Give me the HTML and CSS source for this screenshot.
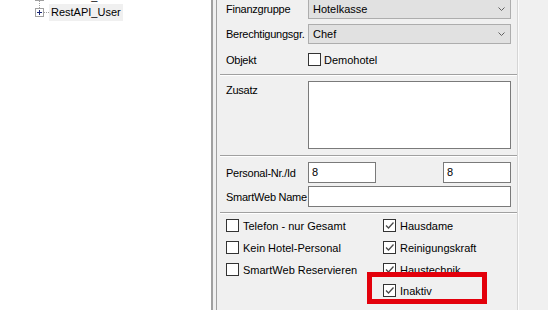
FILE: index.html
```html
<!DOCTYPE html>
<html lang="de">
<head>
<meta charset="utf-8">
<title>Benutzer</title>
<link rel="stylesheet" href="styles.css">
</head>
<body>
<div class="window">
  <div class="tree">
    <div class="node cut">
      <span class="exp"></span><span class="dots"></span><span class="lbl plain">RestAPI_Demo</span>
    </div>
    <div class="node">
      <span class="exp"><span class="up"></span></span><span class="dots"></span><span class="lbl">RestAPI_User</span>
    </div>
  </div>
  <div class="splitter"></div>
  <div class="panel">
    <div class="content">
      <div class="row first">
        <span class="lab">Finanzgruppe</span>
        <div class="select"><span>Hotelkasse</span><svg class="chev" width="7" height="4" viewBox="0 0 7 4"><path d="M0.5 0.5 L3.5 3.5 L6.5 0.5" fill="none" stroke="#606060" stroke-width="1"/></svg></div>
      </div>
      <div class="row gap5">
        <span class="lab">Berechtigungsgr.</span>
        <div class="select"><span>Chef</span><svg class="chev" width="7" height="4" viewBox="0 0 7 4"><path d="M0.5 0.5 L3.5 3.5 L6.5 0.5" fill="none" stroke="#606060" stroke-width="1"/></svg></div>
      </div>
      <div class="row objekt">
        <span class="lab">Objekt</span>
        <span class="cb"></span><span class="cbtext tight">Demohotel</span>
      </div>
      <div class="sep sep1"></div>
      <div class="row top zusatz">
        <span class="lab labtop">Zusatz</span>
        <div class="area"></div>
      </div>
      <div class="sep sep2"></div>
      <div class="row inprow">
        <span class="lab">Personal-Nr./Id</span>
        <div class="inp short">8</div>
        <div class="inp short push">8</div>
      </div>
      <div class="row inprow2">
        <span class="lab">SmartWeb Name</span>
        <div class="inp wide"></div>
      </div>
      <div class="sep sep3"></div>
      <div class="checks">
        <label class="chk"><span class="cb"></span>Telefon - nur Gesamt</label>
        <label class="chk"><span class="cb on"><svg width="11" height="11" viewBox="0 0 11 11"><path d="M2 5.5 L4.5 8 L9.5 2.5" fill="none" stroke="#4a4a4a" stroke-width="1.3"/></svg></span>Hausdame</label>
        <label class="chk"><span class="cb"></span>Kein Hotel-Personal</label>
        <label class="chk"><span class="cb on"><svg width="11" height="11" viewBox="0 0 11 11"><path d="M2 5.5 L4.5 8 L9.5 2.5" fill="none" stroke="#4a4a4a" stroke-width="1.3"/></svg></span>Reinigungskraft</label>
        <label class="chk"><span class="cb"></span>SmartWeb Reservieren</label>
        <label class="chk"><span class="cb on"><svg width="11" height="11" viewBox="0 0 11 11"><path d="M2 5.5 L4.5 8 L9.5 2.5" fill="none" stroke="#4a4a4a" stroke-width="1.3"/></svg></span>Haustechnik</label>
        <label class="chk col2"><span class="cb on"><svg width="11" height="11" viewBox="0 0 11 11"><path d="M2 5.5 L4.5 8 L9.5 2.5" fill="none" stroke="#4a4a4a" stroke-width="1.3"/></svg></span>Inaktiv</label>
      </div>
    </div>
    <div class="rline"></div>
    <div class="rest"></div>
  </div>
  <div class="annot"></div>
</div>
</body>
</html>
```

FILE: styles.css
```css
html, body {
  margin: 0;
  padding: 0;
}
body {
  width: 548px;
  height: 310px;
  overflow: hidden;
  font: 11px "Liberation Sans", Arial, sans-serif;
  color: #000;
  background: #f0f0f0;
}
.window {
  display: flex;
  height: 310px;
  position: relative;
}

/* tree */
.tree {
  width: 211px;
  flex: none;
  background: #fff;
  overflow: hidden;
}
.node {
  display: flex;
  align-items: center;
  height: 17px;
  padding-left: 35px;
}
.node.cut {
  margin-top: -11px;
  height: 15px;
}
.exp {
  position: relative;
  flex: none;
  width: 7px;
  height: 7px;
  border: 1px solid #a0a0a0;
  background: #fff;
}
.exp::before {
  content: "";
  position: absolute;
  left: 1px;
  top: 3px;
  width: 5px;
  height: 1px;
  background: #1c2a78;
}
.exp::after {
  content: "";
  position: absolute;
  left: 3px;
  top: 1px;
  width: 1px;
  height: 5px;
  background: #1c2a78;
}
.up {
  position: absolute;
  left: 3px;
  top: -9px;
  height: 8px;
  border-left: 1px dotted #a0a0a0;
}
.dots {
  flex: none;
  width: 5px;
  border-top: 1px dotted #a0a0a0;
}
.lbl {
  height: 17px;
  line-height: 17px;
  padding: 0 2px;
  background: #f0f0f0;
  white-space: nowrap;
}
.lbl.plain {
  height: 15px;
  line-height: 15px;
  background: transparent;
}

/* splitter */
.splitter {
  flex: none;
  width: 3px;
  border-left: 2px solid #a0a0a0;
  border-right: 1px solid #a0a0a0;
  background: #f0f0f0;
}

/* panel */
.panel {
  flex: 1;
  display: flex;
}
.content {
  flex: none;
  width: 285px;
  padding: 0 6px 0 9px;
  display: flex;
  flex-direction: column;
}
.rline {
  flex: none;
  width: 1px;
  background: #d5d5d5;
}
.rest {
  flex: 1;
  border-left: 1px solid #fbfbfb;
}

.row {
  display: flex;
  align-items: center;
}
.row.top {
  align-items: flex-start;
}
.row.first {
  margin-top: -1px;
}
.row.gap5 {
  margin-top: 5px;
}
.row.objekt {
  margin-top: 9px;
  height: 13px;
}
.lab {
  flex: none;
  width: 82px;
  white-space: nowrap;
  letter-spacing: -0.25px;
}
.labtop {
  padding-top: 3px;
}

.select {
  box-sizing: border-box;
  width: 203px;
  height: 20px;
  border: 1px solid #adadad;
  background: #e1e1e1;
  display: flex;
  align-items: center;
  justify-content: space-between;
  padding: 0 5px 0 4px;
}
.chev {
  display: block;
}

.cb {
  box-sizing: border-box;
  flex: none;
  width: 13px;
  height: 13px;
  border: 1px solid #333;
  background: #fff;
  display: flex;
  align-items: center;
  justify-content: center;
}
.cb svg {
  display: block;
}
.cbtext.tight {
  margin-left: 3px;
}

.sep {
  height: 0;
  margin-left: -6px;
  margin-right: -6px;
  border-top: 1px solid #a0a0a0;
  border-bottom: 1px solid #fff;
}
.sep1 {
  margin-top: 8px;
}
.zusatz {
  margin-top: 5px;
}
.area {
  box-sizing: border-box;
  width: 203px;
  height: 68px;
  border: 1px solid #7a7a7a;
  background: #fff;
}
.sep2 {
  margin-top: 6px;
}
.inprow {
  margin-top: 5px;
}
.inprow2 {
  margin-top: 3px;
}
.inp {
  box-sizing: border-box;
  height: 21px;
  border: 1px solid #7a7a7a;
  background: #fff;
  padding-left: 3px;
  line-height: 19px;
}
.inp.short {
  width: 68px;
}
.inp.push {
  margin-left: auto;
}
.inp.wide {
  width: 203px;
}
.sep3 {
  margin-top: 5px;
}

.checks {
  margin-top: 5px;
  display: grid;
  grid-template-columns: 157px auto;
  grid-auto-rows: 13px;
  row-gap: 9px;
}
.chk {
  display: flex;
  align-items: center;
  gap: 4px;
  height: 13px;
  white-space: nowrap;
}
.chk.col2 {
  grid-column: 2;
  margin-top: -1px;
}

.annot {
  position: absolute;
  left: 367px;
  top: 272px;
  width: 120px;
  height: 32px;
  box-sizing: border-box;
  border: 5px solid #e3000b;
}
```
